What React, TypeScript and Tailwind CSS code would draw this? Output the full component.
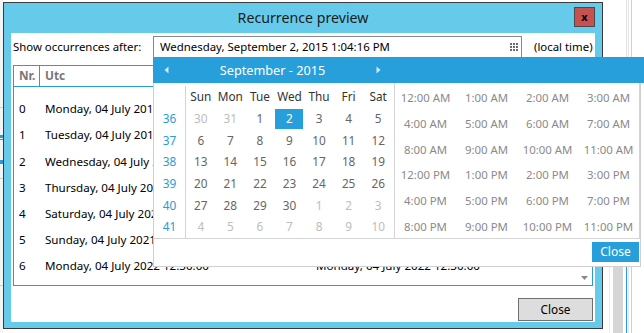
import React from "react";

const weeks = [
  { n: 36, d: [30, 31, 1, 2, 3, 4, 5], m: [0, 1] },
  { n: 37, d: [6, 7, 8, 9, 10, 11, 12], m: [] as number[] },
  { n: 38, d: [13, 14, 15, 16, 17, 18, 19], m: [] as number[] },
  { n: 39, d: [20, 21, 22, 23, 24, 25, 26], m: [] as number[] },
  { n: 40, d: [27, 28, 29, 30, 1, 2, 3], m: [4, 5, 6] },
  { n: 41, d: [4, 5, 6, 7, 8, 9, 10], m: [0, 1, 2, 3, 4, 5, 6] },
];

const dayNames = ["Sun", "Mon", "Tue", "Wed", "Thu", "Fri", "Sat"];

const times = [
  "12:00 AM", "1:00 AM", "2:00 AM", "3:00 AM",
  "4:00 AM", "5:00 AM", "6:00 AM", "7:00 AM",
  "8:00 AM", "9:00 AM", "10:00 AM", "11:00 AM",
  "12:00 PM", "1:00 PM", "2:00 PM", "3:00 PM",
  "4:00 PM", "5:00 PM", "6:00 PM", "7:00 PM",
  "8:00 PM", "9:00 PM", "10:00 PM", "11:00 PM",
];

const rows = [
  "Monday, 04 July 2016 12:30:00",
  "Tuesday, 04 July 2017 12:30:00",
  "Wednesday, 04 July 2018 12:30:00",
  "Thursday, 04 July 2019 12:30:00",
  "Saturday, 04 July 2020 12:30:00",
  "Sunday, 04 July 2021 12:30:00",
  "Monday, 04 July 2022 12:30:00",
];

function Popup() {
  return (
    <div className="absolute left-[153px] top-[57px] w-[491px] flex flex-col">
      <div className="h-[26px] bg-[#279fda] flex items-center w-full">
        <div className="w-[239px] flex items-center justify-between px-[11px]">
          <svg width="5" height="8" viewBox="0 0 5 8"><path d="M4.5 0.5 L0.5 4 L4.5 7.5 Z" fill="#cfe9f7" /></svg>
          <span className="text-white text-[12.7px] leading-none">September - 2015</span>
          <svg width="5" height="8" viewBox="0 0 5 8"><path d="M0.5 0.5 L4.5 4 L0.5 7.5 Z" fill="#cfe9f7" /></svg>
        </div>
      </div>
      <div className="w-[488px] bg-white border border-t-0 border-[#cfcfcf] flex flex-col">
        <div className="flex h-[156px] border-b border-[#d4d4d4]">
          <div className="w-[239px] flex pt-[3px]">
            <div className="w-[32px] border-r border-[#d4d4d4] flex flex-col">
              <div className="h-[22px]" />
              {weeks.map((w) => (
                <div key={w.n} className="h-[21.8px] leading-none flex items-center justify-center text-[11.8px] text-[#2b9bd6]">
                  {w.n}
                </div>
              ))}
            </div>
            <div className="w-[207px] flex flex-col">
              <div className="h-[22px] grid grid-cols-7">
                {dayNames.map((d) => (
                  <div key={d} className="flex items-center justify-center leading-none text-[11.8px] text-[#333]">{d}</div>
                ))}
              </div>
              {weeks.map((w) => (
                <div key={w.n} className="h-[21.8px] grid grid-cols-7">
                  {w.d.map((d, i) => {
                    const muted = w.m.includes(i);
                    const sel = w.n === 36 && d === 2;
                    return (
                      <div key={i} className="flex items-center justify-center leading-none">
                        {sel ? (
                          <div className="w-[28px] h-[20px] bg-[#279fda] text-white text-[11.8px] flex items-center justify-center">{d}</div>
                        ) : (
                          <span className={muted ? "text-[11.8px] text-[#bdbdbd]" : "text-[11.8px] text-[#666]"}>{d}</span>
                        )}
                      </div>
                    );
                  })}
                </div>
              ))}
            </div>
          </div>
          <div className="w-[246px] ml-[1px] border-l border-r border-[#d4d4d4] pt-[2px] grid grid-cols-4 auto-rows-[25.7px]">
            {times.map((t) => (
              <div key={t} className="flex items-center justify-center leading-none text-[11.4px] text-[#8a8a8a] whitespace-nowrap">{t}</div>
            ))}
          </div>
        </div>
        <div className="h-[27px] flex items-start justify-end pt-[3px] pr-[1px]">
          <div className="w-[47px] h-[20px] bg-[#279fda] text-white text-[12px] flex items-center justify-center">Close</div>
        </div>
      </div>
    </div>
  );
}

export default function App() {
  return (
    <div className="relative w-[644px] h-[333px] overflow-hidden bg-white font-['Noto_Sans',sans-serif]">
      <div className="absolute left-0 top-0 w-[3px] h-[333px] bg-[#f4f4f4]" />
      <div className="absolute left-0 top-[107px] w-[3px] h-px bg-[#cfcfcf]" />
      <div className="absolute left-0 top-[135px] w-[3px] h-[3px] bg-[#2b9bd6]" />
      <div className="absolute left-0 top-[139px] w-[3px] h-px bg-[#d9603a]" />
      <div className="absolute left-0 top-[160px] w-[3px] h-[3px] bg-[#2b9bd6]" />
      <div className="absolute left-0 top-[163px] w-[3px] h-px bg-[#d9603a]" />
      <div className="absolute left-0 top-[178px] w-[3px] h-px bg-[#cfcfcf]" />
      <div className="absolute left-0 top-[285px] w-[3px] h-px bg-[#cfcfcf]" />
      <div className="absolute left-[609px] top-[60px] w-px h-[273px] bg-[#ececec]" />
      <div className="absolute left-[626px] top-0 w-px h-[333px] bg-[#e0e0e0]" />
      <div className="absolute left-[628px] top-0 w-px h-[333px] bg-[#e6e6e6]" />
      <div className="absolute left-[631px] top-0 w-px h-[333px] bg-[#d0d0d0]" />
      <div className="absolute left-[613px] top-[232px] w-[10px] h-[101px] bg-[#d6d6d6]" />
      <div className="absolute left-[626px] top-[232px] w-px h-[101px] bg-[#2b9bd6]" />

      <div className="absolute left-[3px] top-[2px] w-[600px] h-[327px] border border-[#3a3a3a] bg-[#66cbea] flex flex-col">
        <div className="h-[30px] relative flex items-center justify-center">
          <span className="text-[14.2px] text-[#1b1b1b] leading-none">Recurrence preview</span>
          <div className="absolute right-[7px] top-[4px] w-[21px] h-[20px] bg-[#c75050] border border-[#4a4a4a] flex items-center justify-center">
            <span className="text-[11px] font-bold text-black leading-none -mt-[2px]">x</span>
          </div>
        </div>
        <div className="mx-[7px] h-[289px] bg-white flex flex-col">
          <div className="h-[24px] mt-[2px] flex items-center">
            <div className="w-[142px] pl-[2px] text-[11.4px] text-black whitespace-nowrap">Show occurrences after:</div>
            <div className="w-[369px] h-[22px] border border-[#828790] flex items-center justify-between pl-[6px] pr-[3px]">
              <span className="text-[11.4px] text-black whitespace-nowrap">Wednesday, September 2, 2015 1:04:16 PM</span>
              <svg width="8" height="8" viewBox="0 0 8 8">
                {[0, 3, 6].map((y) => [0, 3, 6].map((x) => <rect key={`${x}-${y}`} x={x} y={y} width="2" height="2" fill="#6b6b6b" />))}
              </svg>
            </div>
            <div className="ml-[12px] text-[11.4px] text-black whitespace-nowrap">(local time)</div>
          </div>
          <div className="ml-[2px] mt-[6px] w-[580px] h-[221px] border border-[#2b9bd6] flex flex-col relative">
            <div className="h-[21px] border-b border-[#2b9bd6] flex">
              <div className="w-[26px] border-r border-[#2b9bd6] flex items-center pl-[5px] text-[11.8px] font-bold text-[#777]">Nr.</div>
              <div className="w-[270px] flex items-center pl-[5px] text-[11.8px] font-bold text-[#777]">Utc</div>
              <div className="flex-1 flex items-center pl-[6px] text-[11.8px] font-bold text-[#777]">Local</div>
            </div>
            <div className="pt-[9px] flex flex-col">
              {rows.map((r, i) => (
                <div key={i} className="h-[26.1px] flex items-center text-[11.6px] text-black whitespace-nowrap">
                  <div className="w-[26px] pl-[5px]">{i}</div>
                  <div className="w-[270px] pl-[5px]">{r}</div>
                  <div className="pl-[6px]">{r}</div>
                </div>
              ))}
            </div>
            <div className="absolute right-[4px] bottom-[5px]">
              <svg width="7" height="4" viewBox="0 0 7 4"><path d="M0 0 L7 0 L3.5 4 Z" fill="#8a8a8a" /></svg>
            </div>
          </div>
          <div className="flex justify-end mt-[12px] pr-[2px]">
            <div className="w-[75px] h-[23px] bg-[#dddddd] border border-[#707070] flex items-center justify-center text-[11.8px] text-black">Close</div>
          </div>
        </div>
      </div>

      <Popup />
    </div>
  );
}
